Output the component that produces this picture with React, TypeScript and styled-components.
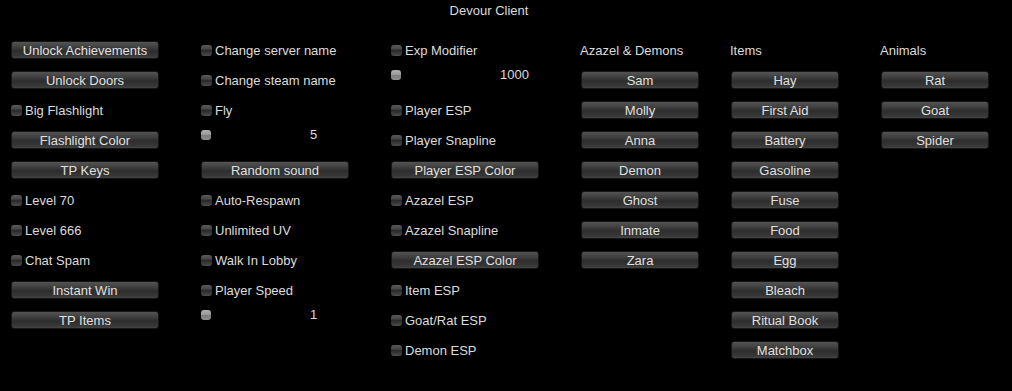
import React from 'react';
import styled, { createGlobalStyle } from 'styled-components';

type Item =
  | { kind: 'button'; label: string }
  | { kind: 'toggle'; label: string }
  | { kind: 'slider'; value: string }
  | { kind: 'heading'; label: string };

const b = (label: string): Item => ({ kind: 'button', label });
const t = (label: string): Item => ({ kind: 'toggle', label });
const s = (value: string): Item => ({ kind: 'slider', value });
const h = (label: string): Item => ({ kind: 'heading', label });

const columns: { width: number; buttonWidth: number; items: Item[] }[] = [
  {
    width: 190,
    buttonWidth: 148,
    items: [
      b('Unlock Achievements'),
      b('Unlock Doors'),
      t('Big Flashlight'),
      b('Flashlight Color'),
      b('TP Keys'),
      t('Level 70'),
      t('Level 666'),
      t('Chat Spam'),
      b('Instant Win'),
      b('TP Items'),
    ],
  },
  {
    width: 190,
    buttonWidth: 148,
    items: [
      t('Change server name'),
      t('Change steam name'),
      t('Fly'),
      s('5'),
      b('Random sound'),
      t('Auto-Respawn'),
      t('Unlimited UV'),
      t('Walk In Lobby'),
      t('Player Speed'),
      s('1'),
    ],
  },
  {
    width: 190,
    buttonWidth: 148,
    items: [
      t('Exp Modifier'),
      s('1000'),
      t('Player ESP'),
      t('Player Snapline'),
      b('Player ESP Color'),
      t('Azazel ESP'),
      t('Azazel Snapline'),
      b('Azazel ESP Color'),
      t('Item ESP'),
      t('Goat/Rat ESP'),
      t('Demon ESP'),
    ],
  },
  {
    width: 150,
    buttonWidth: 118,
    items: [
      h('Azazel & Demons'),
      b('Sam'),
      b('Molly'),
      b('Anna'),
      b('Demon'),
      b('Ghost'),
      b('Inmate'),
      b('Zara'),
    ],
  },
  {
    width: 150,
    buttonWidth: 108,
    items: [
      h('Items'),
      b('Hay'),
      b('First Aid'),
      b('Battery'),
      b('Gasoline'),
      b('Fuse'),
      b('Food'),
      b('Egg'),
      b('Bleach'),
      b('Ritual Book'),
      b('Matchbox'),
    ],
  },
  {
    width: 120,
    buttonWidth: 108,
    items: [h('Animals'), b('Rat'), b('Goat'), b('Spider')],
  },
];

const App: React.FC = () => {
  return (
    <Window>
      <GlobalStyle />
      <Title>Devour Client</Title>
      <Columns>
        {columns.map((col, ci) => (
          <Column key={ci} $width={col.width}>
            {col.items.map((item, i) => {
              if (item.kind === 'button') {
                return (
                  <Row key={i}>
                    <Button $width={col.buttonWidth}>{item.label}</Button>
                  </Row>
                );
              }
              if (item.kind === 'toggle') {
                return (
                  <Row key={i}>
                    <Check />
                    <Label>{item.label}</Label>
                  </Row>
                );
              }
              if (item.kind === 'slider') {
                return (
                  <SliderRow key={i}>
                    <Thumb />
                    <SliderValue>{item.value}</SliderValue>
                  </SliderRow>
                );
              }
              return (
                <Row key={i}>
                  <Heading>{item.label}</Heading>
                </Row>
              );
            })}
          </Column>
        ))}
      </Columns>
    </Window>
  );
};

export default App;

const GlobalStyle = createGlobalStyle`
  html, body {
    margin: 0;
    padding: 0;
    background: #000;
  }
  body {
    font-family: 'Liberation Sans', Arial, sans-serif;
    font-size: 13px;
    color: #dcdcdc;
  }
`;

const Window = styled.div`
  width: 1012px;
  height: 391px;
  background: #000;
  overflow: hidden;
`;

const Title = styled.div`
  width: 978px;
  height: 22px;
  line-height: 22px;
  text-align: center;
`;

const Columns = styled.div`
  display: flex;
  padding: 13px 0 0 11px;
`;

const Column = styled.div<{ $width: number }>`
  display: flex;
  flex-direction: column;
  width: ${(p) => p.$width}px;
  flex-shrink: 0;
`;

const Row = styled.div`
  height: 30px;
  display: flex;
  align-items: center;
`;

const SliderRow = styled.div`
  height: 30px;
  display: flex;
  align-items: center;
  padding-bottom: 11px;
  box-sizing: border-box;
`;

const Button = styled.div<{ $width: number }>`
  width: ${(p) => p.$width}px;
  height: 18px;
  box-sizing: border-box;
  border: 1px solid #161616;
  border-radius: 3px;
  background: linear-gradient(
    #545454 0%,
    #404040 30%,
    #2e2e2e 55%,
    #363636 85%,
    #444444 100%
  );
  text-align: center;
  line-height: 17px;
  color: #e0e0e0;
  white-space: nowrap;
`;

const Check = styled.div`
  width: 11px;
  height: 11px;
  border-radius: 3px;
  margin-right: 3px;
  flex-shrink: 0;
  background: linear-gradient(
    #5a5a5a 0%,
    #464646 35%,
    #2a2a2a 50%,
    #3a3a3a 75%,
    #4c4c4c 100%
  );
`;

const Label = styled.span`
  white-space: nowrap;
`;

const Heading = styled.span`
  white-space: nowrap;
  margin-left: -1px;
`;

const Thumb = styled.div`
  width: 10px;
  height: 10px;
  border-radius: 3px;
  flex-shrink: 0;
  background: linear-gradient(#b0b0b0 0%, #9a9a9a 45%, #7e7e7e 55%, #8e8e8e 100%);
`;

const SliderValue = styled.span`
  margin-left: 99px;
  white-space: nowrap;
`;
